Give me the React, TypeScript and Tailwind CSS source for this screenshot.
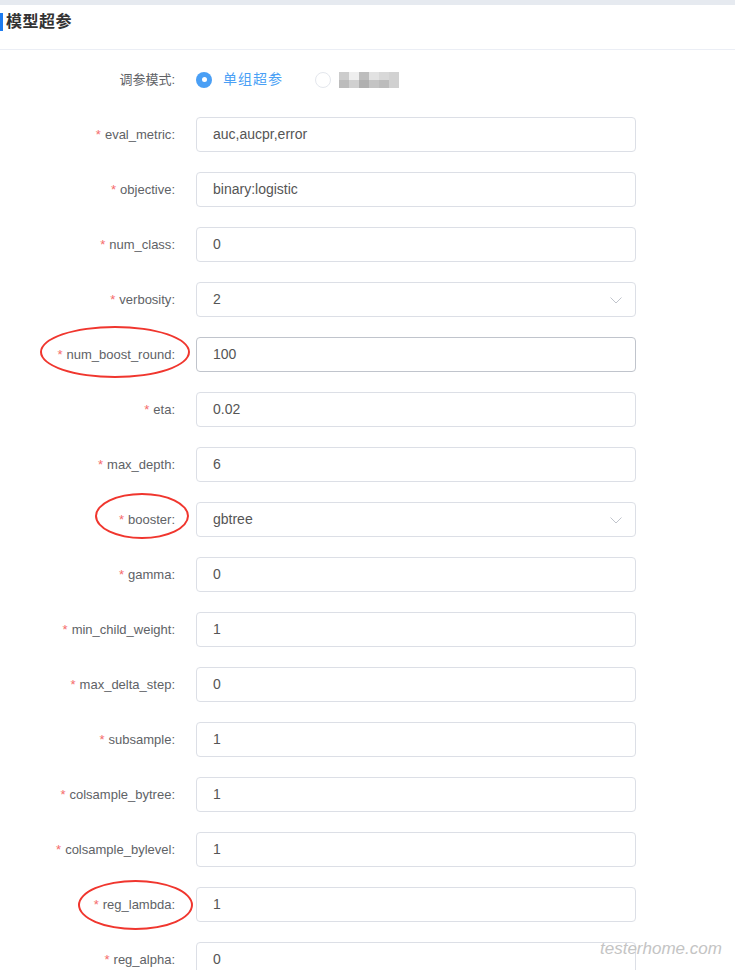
import React from 'react';

type Field = { label: string; value: string; select?: boolean; hover?: boolean };

const fields: Field[] = [
  { label: 'eval_metric', value: 'auc,aucpr,error' },
  { label: 'objective', value: 'binary:logistic' },
  { label: 'num_class', value: '0' },
  { label: 'verbosity', value: '2', select: true },
  { label: 'num_boost_round', value: '100', hover: true },
  { label: 'eta', value: '0.02' },
  { label: 'max_depth', value: '6' },
  { label: 'booster', value: 'gbtree', select: true },
  { label: 'gamma', value: '0' },
  { label: 'min_child_weight', value: '1' },
  { label: 'max_delta_step', value: '0' },
  { label: 'subsample', value: '1' },
  { label: 'colsample_bytree', value: '1' },
  { label: 'colsample_bylevel', value: '1' },
  { label: 'reg_lambda', value: '1' },
  { label: 'reg_alpha', value: '0' },
];

const Chevron = () => (
  <svg width="12" height="7" viewBox="0 0 12 7" fill="none" className="absolute right-[13px] top-[14px]">
    <path d="M0.5 0.5l5.5 5.5 5.5-5.5" stroke="#c0c4cc" strokeWidth="1" />
  </svg>
);

const App = () => {
  return (
    <div
      className="relative w-[735px] h-[970px] overflow-hidden bg-white"
      style={{ fontFamily: '"Liberation Sans", "Noto Sans CJK SC", sans-serif' }}
    >
      <div className="h-[5px] bg-[#e6eaf0]" />

      {/* header */}
      <div className="h-[45px] flex items-center border-b border-[#ebeef5]">
        <div className="w-[3px] h-[18px] bg-[#1e7cf0] mr-[3px] -mt-[10px]" />
        <h2 className="text-[16px] font-bold text-[#333] -mt-[10px] tracking-[0.5px]">模型超参</h2>
      </div>

      {/* form */}
      <div className="pt-[12px] flex flex-col gap-[20px]">
        <div className="flex items-center h-[35px]">
          <div className="w-[175px] text-right text-[13px] text-[#606266]">调参模式:</div>
          <div className="ml-[21px] flex items-center">
            <span className="w-[16px] h-[16px] rounded-full bg-[#4a9ff5] flex items-center justify-center">
              <span className="w-[5px] h-[5px] rounded-full bg-white" />
            </span>
            <span className="ml-[11px] text-[14px] text-[#4a9ff5] tracking-[1px]">单组超参</span>
            <span className="ml-[32px] w-[16px] h-[16px] rounded-full border border-[#e4e7ed]" />
            <span className="ml-[8px] flex flex-col">
              <span className="flex">
                <span className="w-[10px] h-[8px] bg-[#ccc]" />
                <span className="w-[10px] h-[8px] bg-[#eee]" />
                <span className="w-[10px] h-[8px] bg-[#bdbdbd]" />
                <span className="w-[10px] h-[8px] bg-[#e2e2e2]" />
                <span className="w-[10px] h-[8px] bg-[#d8d8d8]" />
                <span className="w-[10px] h-[8px] bg-[#d2d2d2]" />
              </span>
              <span className="flex">
                <span className="w-[10px] h-[8px] bg-[#bcbcbc]" />
                <span className="w-[10px] h-[8px] bg-[#d0d0d0]" />
                <span className="w-[10px] h-[8px] bg-[#b0b0b0]" />
                <span className="w-[10px] h-[8px] bg-[#c4c4c4]" />
                <span className="w-[10px] h-[8px] bg-[#bcbcbc]" />
                <span className="w-[10px] h-[8px] bg-[#d0d0d0]" />
              </span>
            </span>
          </div>
        </div>

        {fields.map((f) => (
          <div key={f.label} className="flex items-center h-[35px]">
            <div className="w-[175px] text-right text-[13px] text-[#606266]">
              <span className="text-[#f56c6c] mr-[4px]">*</span>
              {f.label}:
            </div>
            <div
              className={`relative ml-[21px] w-[440px] h-[35px] rounded-[4px] border flex items-center pl-[16px] text-[14px] text-[#555] ${
                f.hover ? 'border-[#c0c4cc]' : 'border-[#dcdfe6]'
              }`}
            >
              {f.value}
              {f.select && <Chevron />}
            </div>
          </div>
        ))}
      </div>

      {/* annotation ellipses */}
      <div className="absolute left-[40px] top-[326px] w-[150px] h-[52px] rounded-[50%] border-[2.5px] border-[#f0362e]" />
      <div className="absolute left-[95px] top-[493px] w-[94px] h-[46px] rounded-[50%] border-[2.5px] border-[#f0362e]" />
      <div className="absolute left-[78px] top-[880px] w-[115px] h-[50px] rounded-[50%] border-[2.5px] border-[#f0362e]" />

      {/* watermark */}
      <div className="absolute left-[600px] top-[936px] text-[17px] font-light italic text-[#c4c4c4]">
        testerhome.com
      </div>
    </div>
  );
};

export default App;
